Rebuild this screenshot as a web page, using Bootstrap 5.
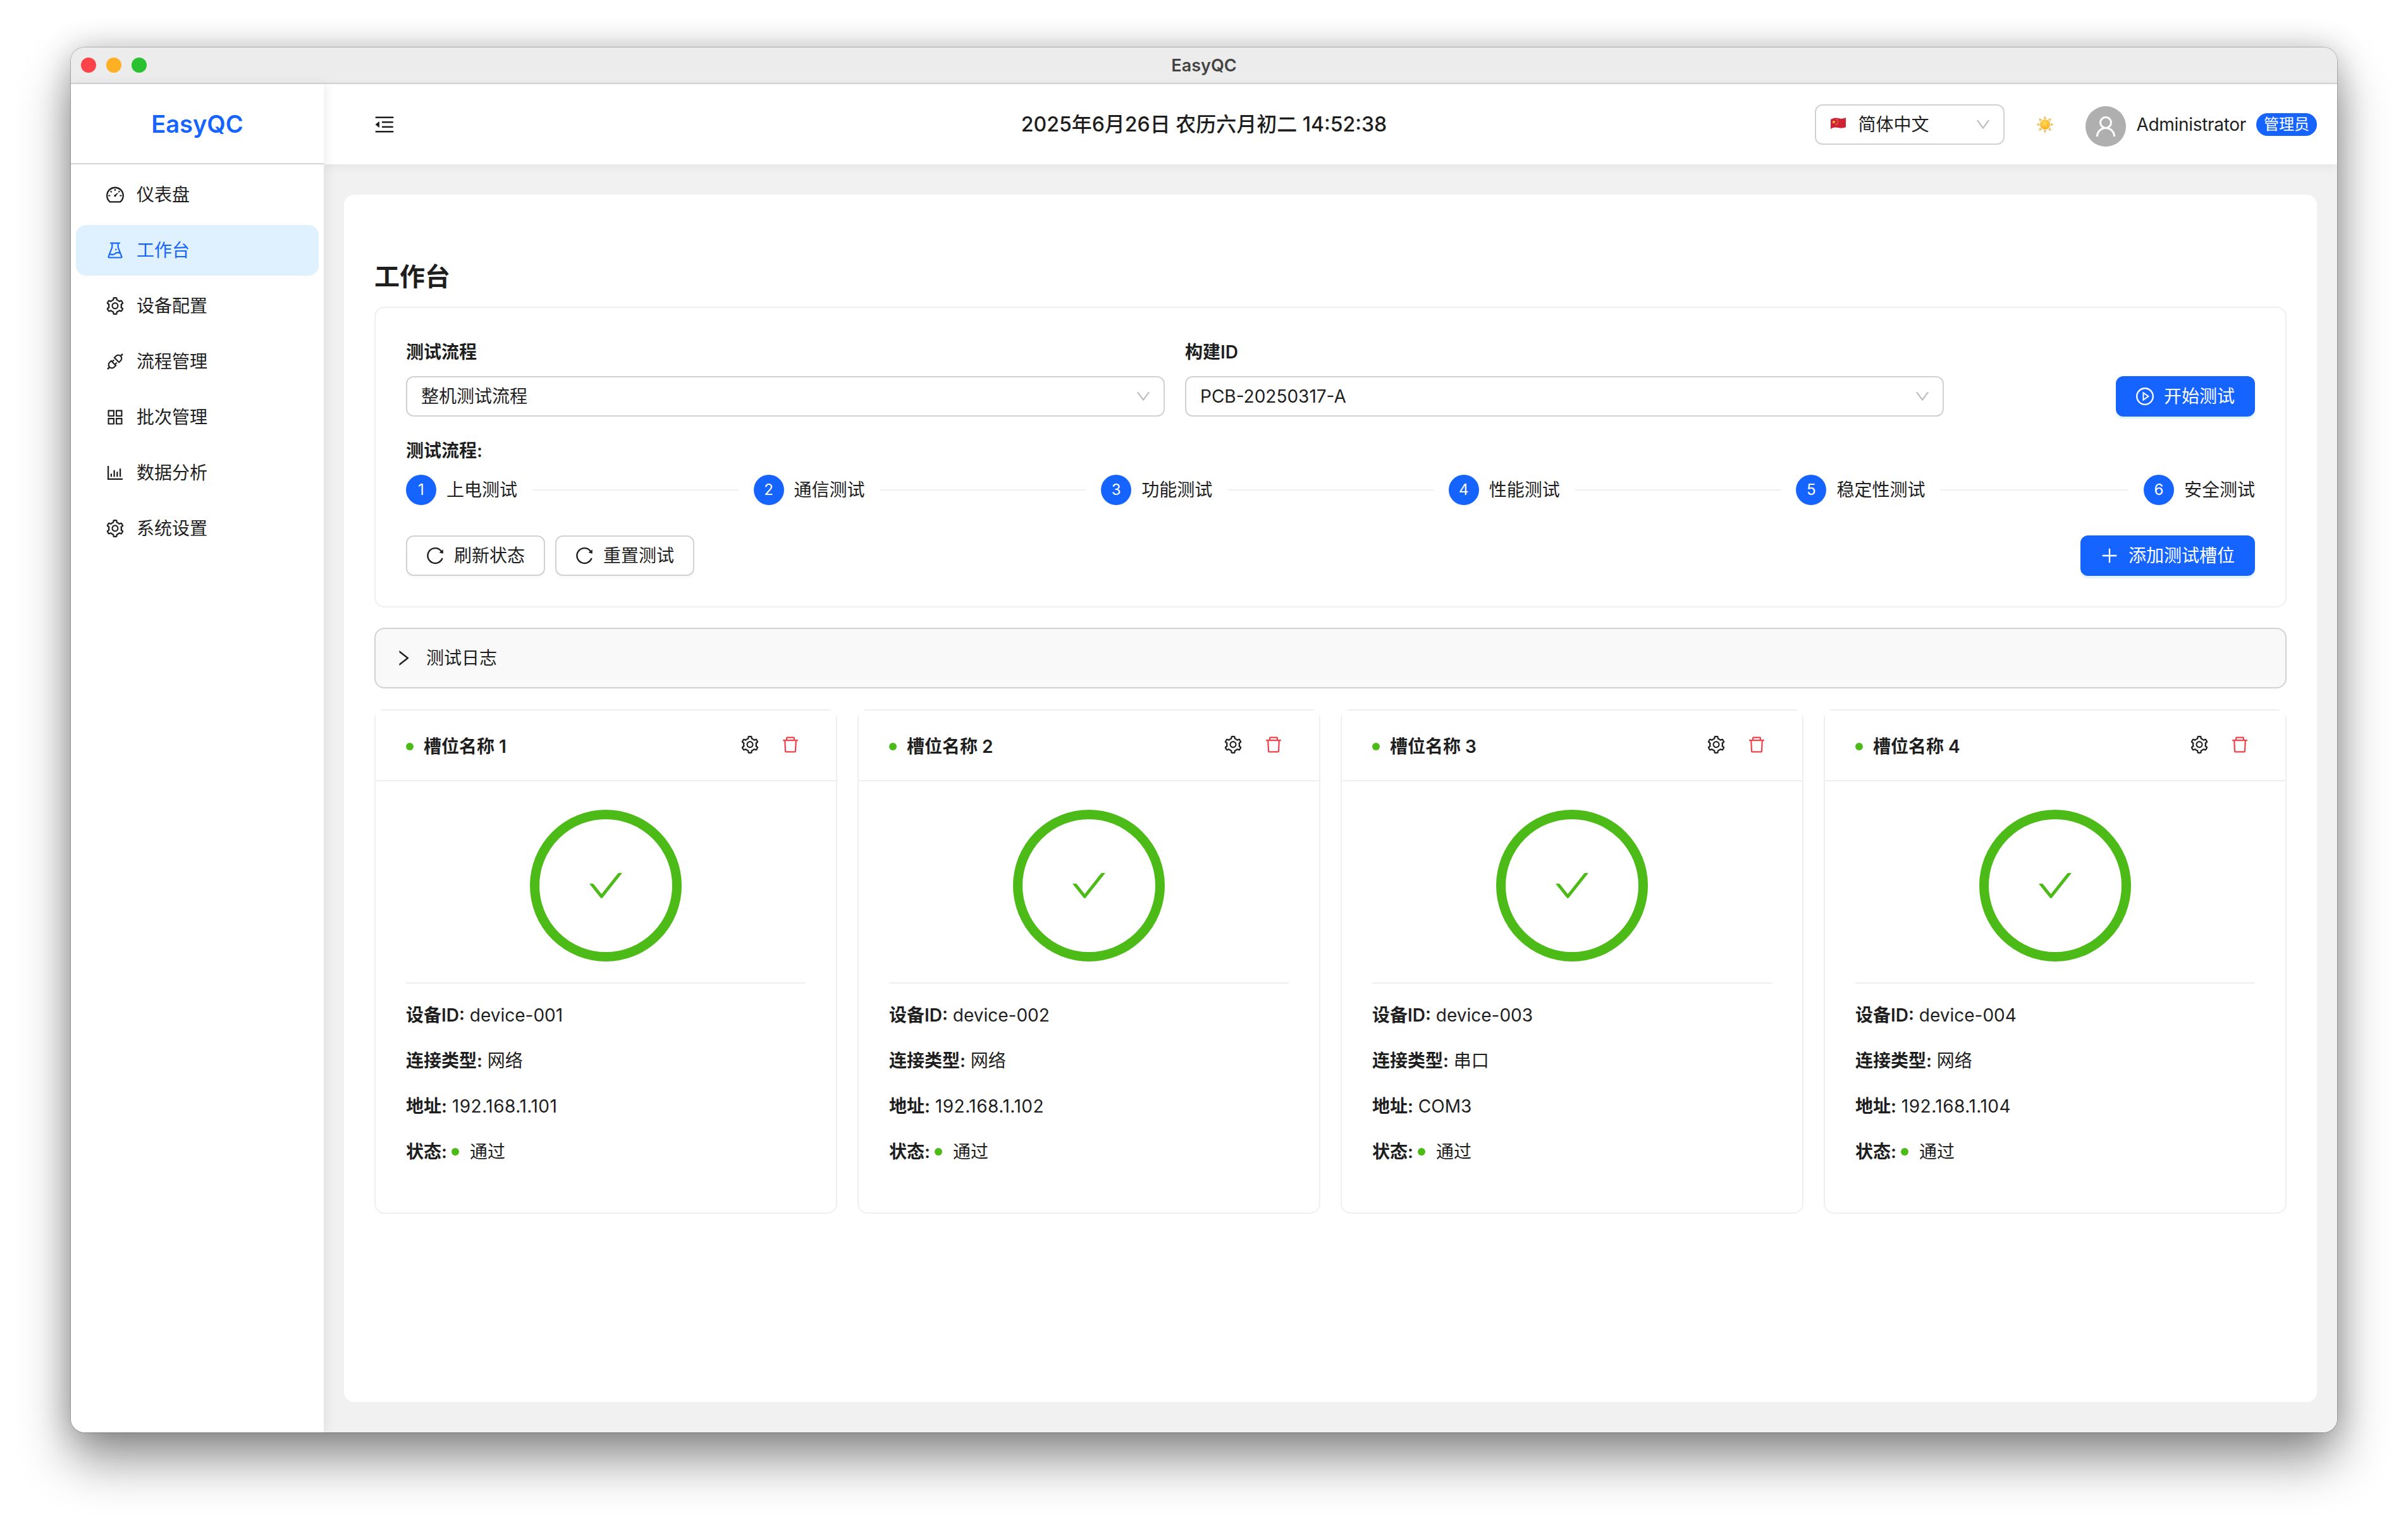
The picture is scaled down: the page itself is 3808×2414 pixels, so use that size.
<!DOCTYPE html>
<html lang="zh-CN">
<head>
<meta charset="utf-8">
<title>EasyQC</title>
<link href="https://cdn.jsdelivr.net/npm/bootstrap@5.3.0/dist/css/bootstrap.min.css" rel="stylesheet">
<style>
html,body{background:#fff;}
body{font-family:Inter,"Noto Sans CJK SC",sans-serif;font-size:28px;line-height:44px;color:#1e1e1e;padding-top:75px;min-height:2414px;overflow:hidden;}
.qc-window{width:3584px;height:2191px;border-radius:22px;overflow:hidden;background:#fff;box-shadow:0 0 0 1px rgba(0,0,0,.22),0 44px 80px rgba(0,0,0,.42),0 0 50px rgba(0,0,0,.2);}
.qc-titlebar{height:58px;flex:none;background:#ececec;border-bottom:2px solid #d4d4d4;padding:0 16px;}
.qc-lights,.qc-titlespacer{flex:1 1 0;}
.qc-light{width:24px;height:24px;border-radius:50%;}
.qc-red{background:#fc4347;}.qc-amber{background:#feb024;}.qc-green{background:#29c132;}
.qc-wintitle{font-size:27px;font-weight:600;color:#444;line-height:1;}
.qc-ico{fill:currentColor;flex:none;display:block;}
.i24{width:24px;height:24px;}.i28{width:28px;height:28px;}.i32{width:32px;height:32px;}
.qc-side{width:400px;flex:none;background:#fff;box-shadow:4px 0 16px rgba(0,0,0,.07);position:relative;z-index:2;}
.qc-logo{height:127px;border-bottom:2px solid #d4d4d4;color:#1664ff;font-size:38px;font-weight:600;line-height:1;}
.qc-menu{padding:8px 8px 0;gap:8px;}
.qc-item{height:80px;padding-left:48px;gap:20px;border-radius:16px;color:#1e1e1e;text-decoration:none;}
.qc-item.qc-on{background:#dff0fe;color:#1664ff;}
.qc-main{min-width:0;background:#f1f1f1;}
.qc-head{height:127px;flex:none;background:#fff;padding:0 32px 0 80px;box-shadow:0 4px 16px rgba(0,0,0,.06);position:relative;z-index:1;}
.qc-date{width:600px;margin-left:980px;text-align:center;font-size:32px;font-weight:500;}
.qc-select{height:64px;padding:0 20px 0 22px;border:2px solid #d2d2d2;border-radius:12px;background-image:none;background-color:#fff;font-size:28px;line-height:44px;color:#1e1e1e;}
.qc-lang{width:300px;}
.qc-wide{width:1200px;}
.qc-arrow{color:#bdbdbd;margin-left:auto;}
.qc-flag{width:26px;height:20px;margin:-3px 18px 0 0;}
.qc-sun{width:28px;height:28px;margin:0 50px;}
.qc-avatar{width:64px;height:64px;border-radius:50%;background:#afafaf;color:#fff;margin-top:6px;margin-right:16px;}
.qc-admin{letter-spacing:-.3px;}
.qc-role{height:36px;padding:0 12px;border-radius:18px;background:#1664ff;color:#fff;font-size:24px;line-height:36px;margin-left:16px;}
.qc-panel{margin:48px 32px;padding:102px 48px 0;background:#fff;border-radius:16px;}
.qc-title{font-size:40px;line-height:56px;font-weight:600;margin:0 0 19px;color:#1e1e1e;}
.qc-box{border:2px solid #efefef;border-radius:16px;padding:48px;margin-bottom:32px;}
.qc-label{font-weight:600;margin-bottom:16px;line-height:44px;}
.qc-gap32{gap:32px;}
.qc-flow{margin:32px 0 16px;font-weight:600;line-height:44px;}
.qc-step{flex:1 1 0;min-width:0;}
.qc-step:last-child{flex:0 0 auto;}
.qc-num{width:48px;height:48px;border-radius:50%;background:#1664ff;color:#fff;font-size:24px;line-height:48px;text-align:center;flex:none;margin-right:16px;}
.qc-line{flex:1 1 0;height:2px;background:#efefef;margin:0 24px;}
.qc-actions{margin-top:48px;}
.btn.qc-btn{height:64px;padding:0 30px;border-radius:12px;border:2px solid #d2d2d2;background:#fff;color:#1e1e1e;font-size:28px;line-height:44px;gap:16px;box-shadow:0 4px 0 rgba(0,0,0,.02);}
.btn.qc-btn.qc-blue{background:#1664ff;border-color:#1664ff;color:#fff;box-shadow:0 4px 0 rgba(5,145,255,.1);}
.qc-log{height:96px;background:#f9f9f9;border:2px solid #d2d2d2;border-radius:16px;padding:0 30px;gap:22px;margin-bottom:33px;}
.qc-slots{display:grid;grid-template-columns:repeat(4,1fr);gap:32px;}
.card.qc-slot{border:2px solid #efefef;border-radius:16px;height:798px;--bs-card-bg:#fff;}
.card-header.qc-slothead{height:112px;padding:4px 58px 0 48px;background:#fff;border-bottom:2px solid #efefef;font-weight:600;}
.qc-dot{width:12px;height:12px;border-radius:50%;background:#4cbb17;flex:none;}
.qc-slotname{margin:0 auto 0 16px;}
.qc-gear{margin-right:36px;margin-top:-6px;color:#1e1e1e;}
.qc-trash{color:#f0444d;margin-top:-6px;}
.card-body.qc-slotbody{padding:45px 48px 0;}
.qc-ring{width:240px;height:240px;border-radius:50%;border:15px solid #4cbb17;color:#4cbb17;margin:0 auto 33px;}
.qc-check{width:56px;height:56px;}
.qc-rule{height:2px;background:#efefef;margin-bottom:28px;}
.qc-info{margin:0 0 28px;line-height:44px;}
.qc-info b{font-weight:600;}
.qc-infodot{margin:0 17px 0 7px;}
.qc-addr{letter-spacing:.5px;}
</style>
</head>
<body>
<svg class="d-none" xmlns="http://www.w3.org/2000/svg">
<symbol id="i-dash" viewBox="64 64 896 896"><path d="M924.8 385.6a446.7 446.7 0 0 0-96-142.4 446.7 446.7 0 0 0-142.4-96C631.1 123.8 572.5 112 512 112s-119.1 11.8-174.4 35.2a446.7 446.7 0 0 0-142.4 96 446.7 446.7 0 0 0-96 142.4C75.8 440.9 64 499.5 64 560c0 132.7 58.3 257.7 159.9 343.1l1.7 1.4c5.8 4.8 13.1 7.5 20.6 7.5h531.7c7.5 0 14.8-2.7 20.6-7.5l1.7-1.4C901.7 817.7 960 692.7 960 560c0-60.5-11.9-119.1-35.2-174.4zM761.4 836H262.6A371.12 371.12 0 0 1 140 560c0-99.4 38.7-192.8 109-263 70.3-70.3 163.7-109 263-109 99.4 0 192.8 38.7 263 109 70.3 70.3 109 163.7 109 263 0 105.6-44.5 205.5-122.6 276zM623.5 421.5a8.03 8.03 0 0 0-11.3 0L527.7 506c-18.7-5-39.4-.2-54.1 14.5a55.95 55.95 0 0 0 0 79.2 55.95 55.95 0 0 0 79.2 0 55.87 55.87 0 0 0 14.5-54.1l84.5-84.5c3.1-3.1 3.1-8.2 0-11.3l-28.3-28.3zM490 320h44c4.4 0 8-3.6 8-8v-80c0-4.4-3.6-8-8-8h-44c-4.4 0-8 3.6-8 8v80c0 4.4 3.6 8 8 8zm260 218v44c0 4.4 3.6 8 8 8h80c4.4 0 8-3.6 8-8v-44c0-4.4-3.6-8-8-8h-80c-4.4 0-8 3.6-8 8zm12.7-197.2l-31.1-31.1a8.03 8.03 0 0 0-11.3 0l-56.6 56.6a8.03 8.03 0 0 0 0 11.3l31.1 31.1c3.1 3.1 8.2 3.1 11.3 0l56.6-56.6c3.1-3.1 3.1-8.2 0-11.3zm-458.6-31.1a8.03 8.03 0 0 0-11.3 0l-31.1 31.1a8.03 8.03 0 0 0 0 11.3l56.6 56.6c3.1 3.1 8.2 3.1 11.3 0l31.1-31.1c3.1-3.1 3.1-8.2 0-11.3l-56.6-56.6zM262 530h-80c-4.4 0-8 3.6-8 8v44c0 4.4 3.6 8 8 8h80c4.4 0 8-3.6 8-8v-44c0-4.4-3.6-8-8-8z"/></symbol>
<symbol id="i-flask" viewBox="64 64 896 896"><path d="M512 472a40 40 0 1 0 80 0 40 40 0 1 0-80 0zm367 352.9L696.3 352V178H768v-68H256v68h71.7v174L145 824.9c-2.8 7.4-4.3 15.2-4.3 23.1 0 35.3 28.7 64 64 64h614.6c7.9 0 15.7-1.5 23.1-4.3 33-12.7 49.4-49.8 36.6-82.8zM395.7 364.7V180h232.6v184.7L719.2 600c-20.7-5.3-42.1-8-63.9-8-61.2 0-119.2 21.5-165.3 60a188.78 188.78 0 0 1-121.3 43.9c-32.7 0-64.1-8.3-91.8-23.7l118.8-307.5zM210.5 844l41.7-107.8c35.7 18.1 75.4 27.8 116.6 27.8 61.2 0 119.2-21.5 165.3-60 33.9-28.2 76.3-43.9 121.3-43.9 35 0 68.4 9.5 97.6 27.1L813.5 844h-603z"/></symbol>
<symbol id="i-gear" viewBox="64 64 896 896"><path d="M924.8 625.7l-65.5-56c3.1-19 4.7-38.4 4.7-57.8s-1.6-38.8-4.7-57.8l65.5-56a32.03 32.03 0 0 0 9.3-35.2l-.9-2.6a443.74 443.74 0 0 0-79.7-137.9l-1.8-2.1a32.12 32.12 0 0 0-35.1-9.5l-81.3 28.9c-30-24.6-63.5-44-99.7-57.6l-15.7-85a32.05 32.05 0 0 0-25.8-25.7l-2.7-.5c-52.1-9.4-106.9-9.4-159 0l-2.7.5a32.05 32.05 0 0 0-25.8 25.7l-15.8 85.4a351.86 351.86 0 0 0-99 57.4l-81.9-29.1a32 32 0 0 0-35.1 9.5l-1.8 2.1a446.02 446.02 0 0 0-79.7 137.9l-.9 2.6c-4.5 12.5-.8 26.5 9.3 35.2l66.3 56.6c-3.1 18.8-4.6 38-4.6 57.1 0 19.2 1.5 38.4 4.6 57.1L99 625.5a32.03 32.03 0 0 0-9.3 35.2l.9 2.6c18.1 50.4 44.9 96.9 79.7 137.9l1.8 2.1a32.12 32.12 0 0 0 35.1 9.5l81.9-29.1c29.8 24.5 63.1 43.9 99 57.4l15.8 85.4a32.05 32.05 0 0 0 25.8 25.7l2.7.5a449.4 449.4 0 0 0 159 0l2.7-.5a32.05 32.05 0 0 0 25.8-25.7l15.7-85a350 350 0 0 0 99.7-57.6l81.3 28.9a32 32 0 0 0 35.1-9.5l1.8-2.1c34.8-41.1 61.6-87.5 79.7-137.9l.9-2.6c4.5-12.3.8-26.3-9.3-35zM788.3 465.9c2.5 15.1 3.8 30.6 3.8 46.1s-1.3 31-3.8 46.1l-6.6 40.1 74.7 63.9a370.03 370.03 0 0 1-42.6 73.6L721 702.8l-31.4 25.8c-23.9 19.6-50.5 35-79.3 45.8l-38.1 14.3-17.9 97a377.5 377.5 0 0 1-85 0l-17.9-97.2-37.8-14.5c-28.5-10.8-55-26.2-78.7-45.7l-31.4-25.9-93.4 33.2c-17-22.9-31.2-47.6-42.6-73.6l75.5-64.5-6.5-40c-2.4-14.9-3.7-30.3-3.7-45.5 0-15.3 1.2-30.6 3.7-45.5l6.5-40-75.5-64.5c11.3-26.1 25.6-50.7 42.6-73.6l93.4 33.2 31.4-25.9c23.7-19.5 50.2-34.9 78.7-45.7l37.9-14.3 17.9-97.2c28.1-3.2 56.8-3.2 85 0l17.9 97 38.1 14.3c28.7 10.8 55.4 26.2 79.3 45.8l31.4 25.8 92.8-32.9c17 22.9 31.2 47.6 42.6 73.6L781.8 426l6.5 39.9zM512 326c-97.2 0-176 78.8-176 176s78.8 176 176 176 176-78.8 176-176-78.8-176-176-176zm79.2 255.2A111.6 111.6 0 0 1 512 614c-29.9 0-58-11.7-79.2-32.8A111.6 111.6 0 0 1 400 502c0-29.9 11.7-58 32.8-79.2C454 401.6 482.1 390 512 390c29.9 0 58 11.6 79.2 32.8A111.6 111.6 0 0 1 624 502c0 29.9-11.7 58-32.8 79.2z"/></symbol>
<symbol id="i-api" viewBox="64 64 896 896"><path d="M917.7 148.8l-42.4-42.4c-1.6-1.6-3.6-2.3-5.7-2.3s-4.1.8-5.7 2.3l-76.1 76.1a199.27 199.27 0 0 0-112.1-34.3c-51.2 0-102.4 19.5-141.5 58.6L432.3 308.7a8.03 8.03 0 0 0 0 11.3L704 591.7c1.6 1.6 3.6 2.3 5.7 2.3 2 0 4.1-.8 5.7-2.3l101.9-101.9c68.9-69 77-175.7 24.3-253.5l76.1-76.1c3.1-3.2 3.1-8.3 0-11.4zM769.1 441.7l-59.4 59.4-186.8-186.8 59.4-59.4c24.9-24.9 58.1-38.7 93.4-38.7 35.3 0 68.4 13.7 93.4 38.7 24.9 24.9 38.7 58.1 38.7 93.4 0 35.3-13.8 68.4-38.7 93.4zm-190.2 105a8.03 8.03 0 0 0-11.3 0L501 613.3 410.7 523l66.7-66.7c3.1-3.1 3.1-8.2 0-11.3L441 408.6a8.03 8.03 0 0 0-11.3 0L363 475.3l-43-43a7.85 7.85 0 0 0-5.7-2.3c-2 0-4.1.8-5.7 2.3L206.8 534.2c-68.9 69-77 175.7-24.3 253.5l-76.1 76.1a8.03 8.03 0 0 0 0 11.3l42.4 42.4c1.6 1.6 3.6 2.3 5.7 2.3s4.1-.8 5.7-2.3l76.1-76.1c33.7 22.9 72.9 34.3 112.1 34.3 51.2 0 102.4-19.5 141.5-58.6l101.9-101.9c3.1-3.1 3.1-8.2 0-11.3l-43-43 66.7-66.7c3.1-3.1 3.1-8.2 0-11.3l-36.6-36.2zM441.7 769.1a131.32 131.32 0 0 1-93.4 38.7c-35.3 0-68.4-13.7-93.4-38.7a131.32 131.32 0 0 1-38.7-93.4c0-35.3 13.7-68.4 38.7-93.4l59.4-59.4 186.8 186.8-59.4 59.4z"/></symbol>
<symbol id="i-grid" viewBox="64 64 896 896"><path d="M464 144H160c-8.8 0-16 7.2-16 16v304c0 8.8 7.2 16 16 16h304c8.8 0 16-7.2 16-16V160c0-8.8-7.2-16-16-16zm-52 268H212V212h200v200zm452-268H560c-8.8 0-16 7.2-16 16v304c0 8.8 7.2 16 16 16h304c8.8 0 16-7.2 16-16V160c0-8.8-7.2-16-16-16zm-52 268H612V212h200v200zM464 544H160c-8.8 0-16 7.2-16 16v304c0 8.8 7.2 16 16 16h304c8.8 0 16-7.2 16-16V560c0-8.8-7.2-16-16-16zm-52 268H212V612h200v200zm452-268H560c-8.8 0-16 7.2-16 16v304c0 8.8 7.2 16 16 16h304c8.8 0 16-7.2 16-16V560c0-8.8-7.2-16-16-16zm-52 268H612V612h200v200z"/></symbol>
<symbol id="i-bars" viewBox="64 64 896 896"><path d="M888 792H200V168c0-4.4-3.6-8-8-8h-56c-4.4 0-8 3.6-8 8v688c0 4.4 3.6 8 8 8h752c4.4 0 8-3.6 8-8v-56c0-4.4-3.6-8-8-8zm-600-80h56c4.4 0 8-3.6 8-8V560c0-4.4-3.6-8-8-8h-56c-4.4 0-8 3.6-8 8v144c0 4.4 3.6 8 8 8zm152 0h56c4.4 0 8-3.6 8-8V384c0-4.4-3.6-8-8-8h-56c-4.4 0-8 3.6-8 8v320c0 4.4 3.6 8 8 8zm152 0h56c4.4 0 8-3.6 8-8V462c0-4.4-3.6-8-8-8h-56c-4.4 0-8 3.6-8 8v242c0 4.4 3.6 8 8 8zm152 0h56c4.4 0 8-3.6 8-8V304c0-4.4-3.6-8-8-8h-56c-4.4 0-8 3.6-8 8v400c0 4.4 3.6 8 8 8z"/></symbol>
<symbol id="i-fold" viewBox="64 64 896 896"><path d="M408 442h480c4.4 0 8-3.6 8-8v-56c0-4.4-3.6-8-8-8H408c-4.4 0-8 3.6-8 8v56c0 4.4 3.6 8 8 8zm-8 204c0 4.4 3.6 8 8 8h480c4.4 0 8-3.6 8-8v-56c0-4.4-3.6-8-8-8H408c-4.4 0-8 3.6-8 8v56zm504-486H120c-4.4 0-8 3.6-8 8v56c0 4.4 3.6 8 8 8h784c4.4 0 8-3.6 8-8v-56c0-4.4-3.6-8-8-8zm0 632H120c-4.4 0-8 3.6-8 8v56c0 4.4 3.6 8 8 8h784c4.4 0 8-3.6 8-8v-56c0-4.4-3.6-8-8-8zM115.4 518.9L271.7 642c5.8 4.6 14.4.5 14.4-6.9V388.9c0-7.4-8.5-11.5-14.4-6.9L115.4 505.1a8.74 8.74 0 0 0 0 13.8z"/></symbol>
<symbol id="i-trash" viewBox="64 64 896 896"><path d="M360 184h-8c4.4 0 8-3.6 8-8v8h304v-8c0 4.4 3.6 8 8 8h-8v72h72v-80c0-35.3-28.7-64-64-64H352c-35.3 0-64 28.7-64 64v80h72v-72zm504 72H160c-17.7 0-32 14.3-32 32v32c0 4.4 3.6 8 8 8h60.4l24.7 523c1.6 34.1 29.8 61 63.9 61h454c34.2 0 62.3-26.8 63.9-61l24.7-523H888c4.4 0 8-3.6 8-8v-32c0-17.7-14.3-32-32-32zM731.3 840H292.7l-24.2-512h487l-24.2 512z"/></symbol>
<symbol id="i-play" viewBox="64 64 896 896"><path d="M512 64C264.6 64 64 264.6 64 512s200.6 448 448 448 448-200.6 448-448S759.4 64 512 64zm0 820c-205.4 0-372-166.6-372-372s166.6-372 372-372 372 166.6 372 372-166.6 372-372 372z"/><path d="M719.4 499.1l-296.1-215A15.9 15.9 0 0 0 398 297v430c0 13.1 14.8 20.5 25.3 12.9l296.1-215a15.9 15.9 0 0 0 0-25.8zm-257.6 134V390.9L628.5 512 461.8 633.1z"/></symbol>
<symbol id="i-plus" viewBox="64 64 896 896"><path d="M482 152h60q8 0 8 8v704q0 8-8 8h-60q-8 0-8-8V160q0-8 8-8Z"/><path d="M192 474h672q8 0 8 8v60q0 8-8 8H160q-8 0-8-8v-60q0-8 8-8Z"/></symbol>
<symbol id="i-reload" viewBox="64 64 896 896"><path d="M909.1 209.3l-56.4 44.1C775.8 155.1 656.2 92 521.9 92 290 92 102.3 279.5 102 511.5 101.7 743.7 289.8 932 521.9 932c181.3 0 335.8-115 394.6-276.1 1.5-4.2-.7-8.9-4.9-10.3l-56.7-19.5a8 8 0 0 0-10.1 4.8c-1.8 5-3.8 10-5.9 14.9-17.3 41-42.1 77.8-73.7 109.4A344.77 344.77 0 0 1 655.9 829c-42.3 17.9-87.4 27-133.8 27-46.5 0-91.5-9.1-133.8-27A341.5 341.5 0 0 1 279 755.2a342.16 342.16 0 0 1-73.7-109.4c-17.9-42.4-27-87.4-27-133.9s9.1-91.5 27-133.9c17.3-41 42.1-77.8 73.7-109.4 31.6-31.6 68.4-56.4 109.3-73.8 42.3-17.9 87.4-27 133.8-27 46.5 0 91.5 9.1 133.8 27a341.5 341.5 0 0 1 109.3 73.8c9.9 9.9 19.2 20.4 27.8 31.4l-60.2 47a8 8 0 0 0 3 14.1l175.6 43c5 1.2 9.9-2.6 9.9-7.7l.8-180.9c-.1-6.6-7.8-10.3-13-6.2z"/></symbol>
<symbol id="i-right" viewBox="64 64 896 896"><path d="M765.7 486.8L314.9 134.7A7.97 7.97 0 0 0 302 141v77.3c0 4.9 2.3 9.6 6.1 12.6l360 281.1-360 281.1c-3.9 3-6.1 7.7-6.1 12.6V883c0 6.7 7.7 10.4 12.9 6.3l450.8-352.1a31.96 31.96 0 0 0 0-50.4z"/></symbol>
<symbol id="i-down" viewBox="64 64 896 896"><path d="M884 256h-75c-5.1 0-9.9 2.5-12.9 6.6L512 654.2 227.9 262.6c-3-4.1-7.8-6.6-12.9-6.6h-75c-6.5 0-10.3 7.4-6.5 12.7l352.6 486.1c12.8 17.6 39 17.6 51.7 0l352.6-486.1c3.9-5.3.1-12.7-6.4-12.7z"/></symbol>
<symbol id="i-check" viewBox="64 64 896 896"><path d="M912 190h-69.9c-9.8 0-19.1 4.5-25.1 12.2L404.7 724.5 207 474a32 32 0 0 0-25.1-12.2H112c-6.7 0-10.4 7.7-6.3 12.9l273.9 347c12.8 16.2 37.4 16.2 50.3 0l488.4-618.9c4.1-5.1.4-12.8-6.3-12.8z"/></symbol>
<symbol id="i-user" viewBox="64 64 896 896"><path d="M858.5 763.6a374 374 0 0 0-80.6-119.5 375.63 375.63 0 0 0-119.5-80.6c-.4-.2-.8-.3-1.2-.5C719.5 518 760 444.7 760 362c0-137-111-248-248-248S264 225 264 362c0 82.7 40.5 156 102.8 201.1-.4.2-.8.3-1.2.5-44.8 18.9-85 46-119.5 80.6a375.63 375.63 0 0 0-80.6 119.5A371.7 371.7 0 0 0 136 901.8a8 8 0 0 0 8 8.2h60c4.4 0 7.9-3.5 8-7.8 2-77.2 33-149.5 87.8-204.3 56.7-56.7 132-87.9 212.2-87.9s155.5 31.2 212.2 87.9C779 752.7 810 825 812 902.2c.1 4.4 3.6 7.8 8 7.8h60a8 8 0 0 0 8-8.2c-1-47.8-10.9-94.3-29.5-138.2zM512 534c-45.9 0-89.1-17.9-121.6-50.4S340 407.9 340 362c0-45.9 17.9-89.1 50.4-121.6S466.1 190 512 190s89.1 17.9 121.6 50.4S684 316.1 684 362c0 45.9-17.9 89.1-50.4 121.6S557.9 534 512 534z"/></symbol>
</svg>

<div class="qc-window mx-auto d-flex flex-column">
  <div class="qc-titlebar d-flex align-items-center">
    <div class="qc-lights d-flex gap-3"><span class="qc-light qc-red"></span><span class="qc-light qc-amber"></span><span class="qc-light qc-green"></span></div>
    <div class="qc-wintitle">EasyQC</div>
    <div class="qc-titlespacer"></div>
  </div>
  <div class="d-flex flex-grow-1" style="min-height:0">
    <aside class="qc-side d-flex flex-column">
      <div class="qc-logo d-flex align-items-center justify-content-center">EasyQC</div>
      <nav class="qc-menu d-flex flex-column">
        <a class="qc-item d-flex align-items-center" href="#"><svg class="qc-ico i28"><use href="#i-dash"/></svg>仪表盘</a>
        <a class="qc-item qc-on d-flex align-items-center" href="#"><svg class="qc-ico i28"><use href="#i-flask"/></svg>工作台</a>
        <a class="qc-item d-flex align-items-center" href="#"><svg class="qc-ico i28"><use href="#i-gear"/></svg>设备配置</a>
        <a class="qc-item d-flex align-items-center" href="#"><svg class="qc-ico i28"><use href="#i-api"/></svg>流程管理</a>
        <a class="qc-item d-flex align-items-center" href="#"><svg class="qc-ico i28"><use href="#i-grid"/></svg>批次管理</a>
        <a class="qc-item d-flex align-items-center" href="#"><svg class="qc-ico i28"><use href="#i-bars"/></svg>数据分析</a>
        <a class="qc-item d-flex align-items-center" href="#"><svg class="qc-ico i28"><use href="#i-gear"/></svg>系统设置</a>
      </nav>
    </aside>
    <div class="qc-main flex-grow-1 d-flex flex-column">
      <header class="qc-head d-flex align-items-center">
        <svg class="qc-ico i32"><use href="#i-fold"/></svg>
        <div class="qc-date">2025年6月26日 农历六月初二 14:52:38</div>
        <div class="ms-auto d-flex align-items-center">
          <div class="form-select qc-select qc-lang d-flex align-items-center">
            <svg class="qc-flag flex-none" viewBox="0 0 26 20"><path d="M1 4c5-3 8-3 12-2s8 1 12-1v15c-4 2-8 2-12 1s-8-1-12 2z" fill="#cf2234"/><path d="M6 5l.8 2 2.100.1-1.600 1.300.6 2-1.900-1.200-1.800 1.200.6-2-1.700-1.300 2.100-.1z" fill="#ffd23f"/><circle cx="11" cy="4.500" r=".8" fill="#ffd23f"/><circle cx="12.500" cy="7" r=".8" fill="#ffd23f"/><circle cx="12" cy="10" r=".8" fill="#ffd23f"/><circle cx="10" cy="12" r=".8" fill="#ffd23f"/></svg>
            <span>简体中文</span>
            <svg class="qc-ico i24 qc-arrow"><use href="#i-down"/></svg>
          </div>
          <svg class="qc-sun flex-none" viewBox="0 0 28 28"><defs><radialGradient id="g-sun" cx=".45" cy=".35" r=".7"><stop offset="0" stop-color="#ffdc4e"/><stop offset="1" stop-color="#f9a825"/></radialGradient></defs><g fill="#f4bf63"><path d="M14 0l2.400 5h-4.800z"/><path d="M14 28l2.400-5h-4.800z"/><path d="M0 14l5-2.400v4.800z"/><path d="M28 14l-5-2.400v4.800z"/><path d="M4 4l5.400 1.800-3.600 3.600z"/><path d="M24 4l-5.400 1.800 3.600 3.600z"/><path d="M4 24l5.400-1.800-3.600-3.600z"/><path d="M24 24l-5.400-1.800 3.600-3.600z"/></g><circle cx="14" cy="14" r="8" fill="url(#g-sun)"/></svg>
          <div class="qc-avatar d-flex align-items-center justify-content-center"><svg class="qc-ico" width="36" height="36"><use href="#i-user"/></svg></div>
          <span class="qc-admin">Administrator</span>
          <span class="qc-role">管理员</span>
        </div>
      </header>
      <main class="qc-panel flex-grow-1">
        <h4 class="qc-title">工作台</h4>
        <section class="qc-box">
          <div class="d-flex align-items-end">
            <div class="d-flex qc-gap32">
              <div>
                <div class="qc-label">测试流程</div>
                <div class="form-select qc-select qc-wide d-flex align-items-center"><span>整机测试流程</span><svg class="qc-ico i24 qc-arrow"><use href="#i-down"/></svg></div>
              </div>
              <div>
                <div class="qc-label">构建ID</div>
                <div class="form-select qc-select qc-wide d-flex align-items-center"><span>PCB-20250317-A</span><svg class="qc-ico i24 qc-arrow"><use href="#i-down"/></svg></div>
              </div>
            </div>
            <button class="btn qc-btn qc-blue ms-auto d-flex align-items-center"><svg class="qc-ico i28"><use href="#i-play"/></svg>开始测试</button>
          </div>
          <div class="qc-flow">测试流程:</div>
          <div class="d-flex">
            <div class="qc-step d-flex align-items-center"><span class="qc-num">1</span><span>上电测试</span><span class="qc-line"></span></div>
            <div class="qc-step d-flex align-items-center"><span class="qc-num">2</span><span>通信测试</span><span class="qc-line"></span></div>
            <div class="qc-step d-flex align-items-center"><span class="qc-num">3</span><span>功能测试</span><span class="qc-line"></span></div>
            <div class="qc-step d-flex align-items-center"><span class="qc-num">4</span><span>性能测试</span><span class="qc-line"></span></div>
            <div class="qc-step d-flex align-items-center"><span class="qc-num">5</span><span>稳定性测试</span><span class="qc-line"></span></div>
            <div class="qc-step d-flex align-items-center"><span class="qc-num">6</span><span>安全测试</span></div>
          </div>
          <div class="qc-actions d-flex">
            <button class="btn qc-btn d-flex align-items-center me-3"><svg class="qc-ico i28"><use href="#i-reload"/></svg>刷新状态</button>
            <button class="btn qc-btn d-flex align-items-center"><svg class="qc-ico i28"><use href="#i-reload"/></svg>重置测试</button>
            <button class="btn qc-btn qc-blue ms-auto d-flex align-items-center"><svg class="qc-ico i28"><use href="#i-plus"/></svg>添加测试槽位</button>
          </div>
        </section>
        <div class="qc-log d-flex align-items-center"><svg class="qc-ico i28"><use href="#i-right"/></svg><span>测试日志</span></div>
        <div class="qc-slots">
          <div class="card qc-slot">
            <div class="card-header qc-slothead d-flex align-items-center"><span class="qc-dot"></span><span class="qc-slotname">槽位名称 1</span><svg class="qc-ico i28 qc-gear"><use href="#i-gear"/></svg><svg class="qc-ico i28 qc-trash"><use href="#i-trash"/></svg></div>
            <div class="card-body qc-slotbody">
              <div class="qc-ring d-flex align-items-center justify-content-center"><svg class="qc-ico qc-check"><use href="#i-check"/></svg></div>
              <div class="qc-rule"></div>
              <p class="qc-info"><b>设备ID:</b> device-001</p>
              <p class="qc-info"><b>连接类型:</b> 网络</p>
              <p class="qc-info"><b>地址:</b> <span class="qc-addr">192.168.1.101</span></p>
              <p class="qc-info d-flex align-items-center"><b>状态:</b><span class="qc-dot qc-infodot"></span>通过</p>
            </div>
          </div>
          <div class="card qc-slot">
            <div class="card-header qc-slothead d-flex align-items-center"><span class="qc-dot"></span><span class="qc-slotname">槽位名称 2</span><svg class="qc-ico i28 qc-gear"><use href="#i-gear"/></svg><svg class="qc-ico i28 qc-trash"><use href="#i-trash"/></svg></div>
            <div class="card-body qc-slotbody">
              <div class="qc-ring d-flex align-items-center justify-content-center"><svg class="qc-ico qc-check"><use href="#i-check"/></svg></div>
              <div class="qc-rule"></div>
              <p class="qc-info"><b>设备ID:</b> device-002</p>
              <p class="qc-info"><b>连接类型:</b> 网络</p>
              <p class="qc-info"><b>地址:</b> <span class="qc-addr">192.168.1.102</span></p>
              <p class="qc-info d-flex align-items-center"><b>状态:</b><span class="qc-dot qc-infodot"></span>通过</p>
            </div>
          </div>
          <div class="card qc-slot">
            <div class="card-header qc-slothead d-flex align-items-center"><span class="qc-dot"></span><span class="qc-slotname">槽位名称 3</span><svg class="qc-ico i28 qc-gear"><use href="#i-gear"/></svg><svg class="qc-ico i28 qc-trash"><use href="#i-trash"/></svg></div>
            <div class="card-body qc-slotbody">
              <div class="qc-ring d-flex align-items-center justify-content-center"><svg class="qc-ico qc-check"><use href="#i-check"/></svg></div>
              <div class="qc-rule"></div>
              <p class="qc-info"><b>设备ID:</b> device-003</p>
              <p class="qc-info"><b>连接类型:</b> 串口</p>
              <p class="qc-info"><b>地址:</b> COM3</p>
              <p class="qc-info d-flex align-items-center"><b>状态:</b><span class="qc-dot qc-infodot"></span>通过</p>
            </div>
          </div>
          <div class="card qc-slot">
            <div class="card-header qc-slothead d-flex align-items-center"><span class="qc-dot"></span><span class="qc-slotname">槽位名称 4</span><svg class="qc-ico i28 qc-gear"><use href="#i-gear"/></svg><svg class="qc-ico i28 qc-trash"><use href="#i-trash"/></svg></div>
            <div class="card-body qc-slotbody">
              <div class="qc-ring d-flex align-items-center justify-content-center"><svg class="qc-ico qc-check"><use href="#i-check"/></svg></div>
              <div class="qc-rule"></div>
              <p class="qc-info"><b>设备ID:</b> device-004</p>
              <p class="qc-info"><b>连接类型:</b> 网络</p>
              <p class="qc-info"><b>地址:</b> <span class="qc-addr">192.168.1.104</span></p>
              <p class="qc-info d-flex align-items-center"><b>状态:</b><span class="qc-dot qc-infodot"></span>通过</p>
            </div>
          </div>
        </div>
      </main>
    </div>
  </div>
</div>
<script src="https://cdn.jsdelivr.net/npm/bootstrap@5.3.0/dist/js/bootstrap.bundle.min.js"></script>
</body>
</html>
